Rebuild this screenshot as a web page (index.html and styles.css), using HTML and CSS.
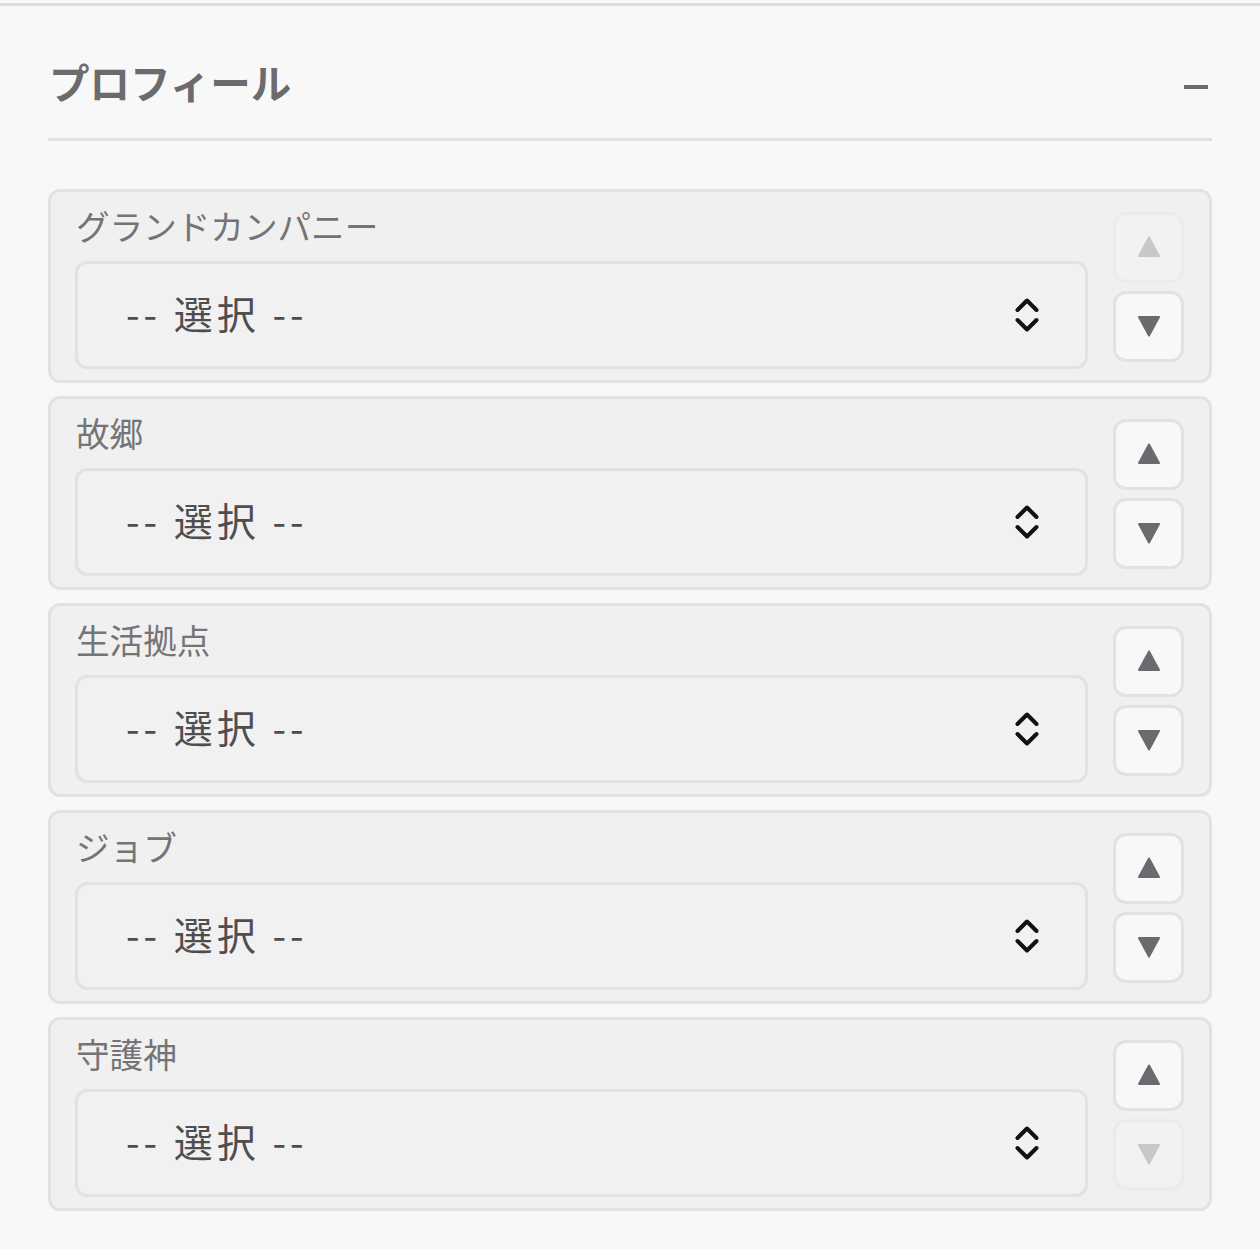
FILE: index.html
```html
<!DOCTYPE html>
<html lang="ja">
<head>
<meta charset="utf-8">
<title>プロフィール</title>
<link rel="stylesheet" href="styles.css">
</head>
<body>
<div class="topbar"></div>
<section class="panel">
  <header class="panel-header">
    <h2 class="panel-title">プロフィール</h2>
    <button class="collapse" aria-label="折りたたむ"><span class="minus"></span></button>
  </header>
  <div class="fields">
    <div class="field">
      <div class="field-main">
        <label class="field-label">グランドカンパニー</label>
        <div class="select-wrap">
          <select class="select"><option>-- 選択 --</option></select>
          <svg class="chev" viewBox="0 0 24 34" width="24" height="34"><polyline points="2.5,12 12,2.5 21.5,12"/><polyline points="2.5,22 12,31.5 21.5,22"/></svg>
        </div>
      </div>
      <div class="moves">
        <button class="move disabled"><svg viewBox="0 0 24 24" width="24" height="24"><polygon points="12,2.5 22,21 2,21"/></svg></button>
        <button class="move"><svg viewBox="0 0 24 24" width="24" height="24"><polygon points="12,21.5 22,3 2,3"/></svg></button>
      </div>
    </div>
    <div class="field">
      <div class="field-main">
        <label class="field-label">故郷</label>
        <div class="select-wrap">
          <select class="select"><option>-- 選択 --</option></select>
          <svg class="chev" viewBox="0 0 24 34" width="24" height="34"><polyline points="2.5,12 12,2.5 21.5,12"/><polyline points="2.5,22 12,31.5 21.5,22"/></svg>
        </div>
      </div>
      <div class="moves">
        <button class="move"><svg viewBox="0 0 24 24" width="24" height="24"><polygon points="12,2.5 22,21 2,21"/></svg></button>
        <button class="move"><svg viewBox="0 0 24 24" width="24" height="24"><polygon points="12,21.5 22,3 2,3"/></svg></button>
      </div>
    </div>
    <div class="field">
      <div class="field-main">
        <label class="field-label">生活拠点</label>
        <div class="select-wrap">
          <select class="select"><option>-- 選択 --</option></select>
          <svg class="chev" viewBox="0 0 24 34" width="24" height="34"><polyline points="2.5,12 12,2.5 21.5,12"/><polyline points="2.5,22 12,31.5 21.5,22"/></svg>
        </div>
      </div>
      <div class="moves">
        <button class="move"><svg viewBox="0 0 24 24" width="24" height="24"><polygon points="12,2.5 22,21 2,21"/></svg></button>
        <button class="move"><svg viewBox="0 0 24 24" width="24" height="24"><polygon points="12,21.5 22,3 2,3"/></svg></button>
      </div>
    </div>
    <div class="field">
      <div class="field-main">
        <label class="field-label">ジョブ</label>
        <div class="select-wrap">
          <select class="select"><option>-- 選択 --</option></select>
          <svg class="chev" viewBox="0 0 24 34" width="24" height="34"><polyline points="2.5,12 12,2.5 21.5,12"/><polyline points="2.5,22 12,31.5 21.5,22"/></svg>
        </div>
      </div>
      <div class="moves">
        <button class="move"><svg viewBox="0 0 24 24" width="24" height="24"><polygon points="12,2.5 22,21 2,21"/></svg></button>
        <button class="move"><svg viewBox="0 0 24 24" width="24" height="24"><polygon points="12,21.5 22,3 2,3"/></svg></button>
      </div>
    </div>
    <div class="field">
      <div class="field-main">
        <label class="field-label">守護神</label>
        <div class="select-wrap">
          <select class="select"><option>-- 選択 --</option></select>
          <svg class="chev" viewBox="0 0 24 34" width="24" height="34"><polyline points="2.5,12 12,2.5 21.5,12"/><polyline points="2.5,22 12,31.5 21.5,22"/></svg>
        </div>
      </div>
      <div class="moves">
        <button class="move"><svg viewBox="0 0 24 24" width="24" height="24"><polygon points="12,2.5 22,21 2,21"/></svg></button>
        <button class="move disabled"><svg viewBox="0 0 24 24" width="24" height="24"><polygon points="12,21.5 22,3 2,3"/></svg></button>
      </div>
    </div>
  </div>
</section>
</body>
</html>
```

FILE: styles.css
```css
* { box-sizing: border-box; }

body {
  margin: 0;
  background: #f8f8f8;
  font-family: "Noto Sans CJK JP", "Noto Sans", sans-serif;
}

.topbar {
  height: 3px;
  margin-top: 3px;
  background: #dcdcdc;
  box-shadow: 0 8px 28px rgba(0, 0, 0, 0.05);
}

.panel {
  padding: 0 48px 40px;
}

.panel-header {
  display: flex;
  justify-content: space-between;
  align-items: center;
  padding: 48px 0 28px;
  border-bottom: 3px solid #e0e0e0;
}

.panel-title {
  margin: 0;
  font-size: 40.5px;
  line-height: 56px;
  font-weight: 700;
  color: #6b6b6e;
  padding-left: 1px;
}

.collapse {
  border: 0;
  background: none;
  padding: 0;
  margin: 10px 4px 0 0;
  width: 24px;
  height: 4px;
  display: flex;
}

.minus {
  display: block;
  width: 24px;
  height: 4px;
  background: #6b6b6e;
}

.fields {
  margin-top: 48px;
  display: flex;
  flex-direction: column;
  gap: 13px;
}

.field {
  display: flex;
  align-items: center;
  gap: 25px;
  height: 194px;
  padding: 12px 25px 11px 24px;
  background: #f0f0f0;
  border: 3px solid #e2e2e2;
  border-radius: 12px;
}

.field-main {
  flex: 1;
  display: flex;
  flex-direction: column;
  gap: 13px;
}

.field-label {
  font-size: 33.6px;
  line-height: 44px;
  color: #747477;
  padding-left: 1px;
}

.select-wrap {
  position: relative;
}

.select {
  appearance: none;
  -webkit-appearance: none;
  display: block;
  width: 100%;
  height: 108px;
  margin: 0;
  padding: 0 80px 6px 48px;
  background: #f1f1f1;
  border: 3px solid #e2e2e2;
  border-radius: 12px;
  font-family: "Noto Sans CJK JP", "Noto Sans", sans-serif;
  font-size: 39px;
  letter-spacing: 4px;
  color: #4e4e50;
}

.chev {
  position: absolute;
  right: 49px;
  top: 37px;
  fill: none;
  stroke: #111;
  stroke-width: 4;
  stroke-linecap: round;
  stroke-linejoin: round;
  pointer-events: none;
}

.moves {
  display: flex;
  flex-direction: column;
  gap: 8px;
}

.move {
  width: 71px;
  height: 71px;
  padding: 0;
  display: flex;
  align-items: center;
  justify-content: center;
  background: #f8f8f8;
  border: 3px solid #e2e2e2;
  border-radius: 13px;
}

.move svg polygon {
  fill: #6b6b6f;
  stroke: #6b6b6f;
  stroke-width: 2;
  stroke-linejoin: round;
}

.move.disabled {
  background: #f2f2f2;
  border-color: #ebebeb;
}

.move.disabled svg polygon {
  fill: #c8c8c8;
  stroke: #c8c8c8;
}
```
